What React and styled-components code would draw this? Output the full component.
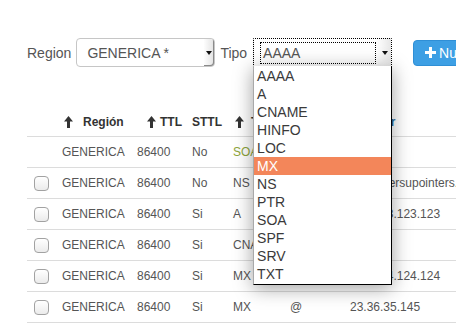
import React from 'react';
import styled, { createGlobalStyle } from 'styled-components';

const Global = createGlobalStyle`
  html, body { margin: 0; padding: 0; background: #fff; overflow: hidden; }
  body { font-family: "Liberation Sans", Arial, sans-serif; }
`;

const Page = styled.div`
  width: 456px;
  height: 325px;
  overflow: hidden;
  box-sizing: border-box;
  padding: 38px 0 0 27px;
`;

const Toolbar = styled.div`
  display: flex;
  align-items: center;
  height: 29px;
  width: 600px;
  white-space: nowrap;
`;

const Label = styled.span`
  font-size: 14px;
  color: #555;
  margin-right: ${p => p.$gap}px;
`;

const Select = styled.div`
  position: relative;
  width: 139px;
  height: 29px;
  box-sizing: border-box;
  display: flex;
  align-items: stretch;
  background: ${p => (p.$focused ? 'linear-gradient(90deg, #fff 0, #fff 122px, #f6f6f6 128px, #e6e6e6 100%)' : '#fff')};
  font-size: 14px;
  color: #555;
  margin-right: ${p => p.$gap || 0}px;
  border: ${p => (p.$focused ? '1px dotted #000' : '1px solid #c6c6c6')};
  border-radius: ${p => (p.$focused ? '1px' : '4px')};
`;

const SelectText = styled.span`
  flex: 1;
  display: flex;
  align-items: center;
  padding-left: 10px;
  overflow: hidden;
  border-radius: 4px 0 0 4px;
`;

const FocusText = styled.span`
  flex: 1;
  display: flex;
  align-items: center;
  margin: 3px 15px 2px 6px;
  padding-left: 2px;
  border: 1px dotted #000;
`;

const ArrowBox = styled.span`
  width: 10px;
  display: flex;
  align-items: center;
  justify-content: center;
  background: linear-gradient(90deg, #fdfdfd, #e2e2e2);
  box-shadow: inset -1px -1px 0 #8a8a8a;
  border-radius: ${p => (p.$round ? '0 3px 3px 0' : '0')};
  &::after {
    content: '';
    border-left: 3px solid transparent;
    border-right: 3px solid transparent;
    border-top: 4px solid #111;
  }
`;

const FocusArrow = styled.span`
  position: absolute;
  right: 3px;
  top: 12px;
  border-left: 3px solid transparent;
  border-right: 3px solid transparent;
  border-top: 4px solid #111;
`;

const Menu = styled.ul`
  position: absolute;
  top: 100%;
  left: -1px;
  width: 139px;
  box-sizing: border-box;
  margin: 0;
  padding: 1px 0;
  list-style: none;
  background: #fff;
  border-right: 1px solid #000;
  border-bottom: 1px solid #000;
  border-left: 1px solid #a9a9a9;
  box-shadow: 0 3px 18px rgba(0, 0, 0, 0.38);
  z-index: 10;
`;

const MenuItem = styled.li`
  height: 18px;
  line-height: 18px;
  padding-left: 3px;
  font-size: 14px;
  color: ${p => (p.$active ? '#fff' : '#3a3a3a')};
  background: ${p => (p.$active ? '#f3865a' : 'transparent')};
`;

const AddButton = styled.button`
  margin-left: 21px;
  height: 26px;
  display: flex;
  align-items: center;
  gap: 3px;
  padding: 0 12px 0 11px;
  background: #3d9fe4;
  border: 1px solid #2f8fd6;
  border-radius: 4px;
  color: #fff;
  font-family: inherit;
  font-size: 14px;
  flex-shrink: 0;
`;

const Table = styled.div`
  margin-top: 41px;
  width: 560px;
`;

const COLS = '35px 75px 55px 41px 57px 60px 1fr';

const HeadRow = styled.div`
  display: grid;
  grid-template-columns: ${COLS};
  height: 29px;
  box-sizing: border-box;
  border-bottom: 1px solid #dcdcdc;
  align-items: center;
  font-size: 12px;
  font-weight: bold;
  color: #333;
`;

const HeadCell = styled.div`
  display: flex;
  align-items: center;
  padding-left: ${p => p.$pad || 0}px;
  gap: ${p => p.$gap || 0}px;
  color: ${p => p.$link ? '#2c679c' : '#333'};
  white-space: nowrap;
`;

const Row = styled.div`
  display: grid;
  grid-template-columns: ${COLS};
  height: 31px;
  box-sizing: border-box;
  border-bottom: 1px solid #dcdcdc;
  align-items: center;
  font-size: 12px;
  color: #555;
`;

const Cell = styled.div`
  white-space: nowrap;
  color: ${p => p.$color || 'inherit'};
`;

const CheckCell = styled.div`
  padding-left: 7px;
  display: flex;
  align-items: center;
`;

const Check = styled.span`
  width: 15px;
  height: 15px;
  box-sizing: border-box;
  border: 1px solid #a2a2a2;
  border-radius: 4px;
  background: linear-gradient(#ffffff, #ebebeb);
`;

const Arrow = () => (
  <svg width="9" height="12" viewBox="0 0 9 12">
    <path d="M4.5 0 L9 5.5 L6 5.5 L6 12 L3 12 L3 5.5 L0 5.5 Z" fill="#333" />
  </svg>
);

const Plus = () => (
  <svg width="11" height="11" viewBox="0 0 11 11">
    <path d="M4 0h3v4h4v3H7v4H4V7H0V4h4z" fill="#fff" />
  </svg>
);

const types = ['AAAA', 'A', 'CNAME', 'HINFO', 'LOC', 'MX', 'NS', 'PTR', 'SOA', 'SPF', 'SRV', 'TXT'];

const rows = [
  { check: false, sttl: 'No', tipo: 'SOA', tipoColor: '#8ea53a', nombre: '@', valor: 'ns1' },
  { check: true, sttl: 'No', tipo: 'NS', nombre: '@', valor: 'ns.serversupointers.com' },
  { check: true, sttl: 'Si', tipo: 'A', nombre: 'www', valor: '123.123.123.123' },
  { check: true, sttl: 'Si', tipo: 'CNAME', nombre: 'mail', valor: 'www' },
  { check: true, sttl: 'Si', tipo: 'MX', nombre: '@', valor: '124.124.124.124' },
  { check: true, sttl: 'Si', tipo: 'MX', nombre: '@', valor: '23.36.35.145' },
];

export default function App() {
  return (
    <Page>
      <Global />
      <Toolbar>
        <Label $gap={5}>Region</Label>
        <Select $gap={5}>
          <SelectText>GENERICA *</SelectText>
          <ArrowBox $round />
        </Select>
        <Label $gap={6}>Tipo</Label>
        <Select $focused>
          <FocusText>AAAA</FocusText>
          <FocusArrow />
          <Menu>
            {types.map(t => (
              <MenuItem key={t} $active={t === 'MX'}>{t}</MenuItem>
            ))}
          </Menu>
        </Select>
        <AddButton>
          <Plus />
          Nuevo
        </AddButton>
      </Toolbar>
      <Table>
        <HeadRow>
          <HeadCell />
          <HeadCell $pad={2} $gap={10}><Arrow />Región</HeadCell>
          <HeadCell $pad={10} $gap={4}><Arrow />TTL</HeadCell>
          <HeadCell>STTL</HeadCell>
          <HeadCell $pad={2} $gap={7}><Arrow />Tipo</HeadCell>
          <HeadCell $pad={2} $gap={5}><Arrow />Nombre</HeadCell>
          <HeadCell $pad={2} $gap={5} $link><Arrow />Valor</HeadCell>
        </HeadRow>
        {rows.map((r, i) => (
          <Row key={i}>
            <CheckCell>{r.check && <Check />}</CheckCell>
            <Cell>GENERICA</Cell>
            <Cell>86400</Cell>
            <Cell>{r.sttl}</Cell>
            <Cell $color={r.tipoColor}>{r.tipo}</Cell>
            <Cell>{r.nombre}</Cell>
            <Cell>{r.valor}</Cell>
          </Row>
        ))}
      </Table>
    </Page>
  );
}
